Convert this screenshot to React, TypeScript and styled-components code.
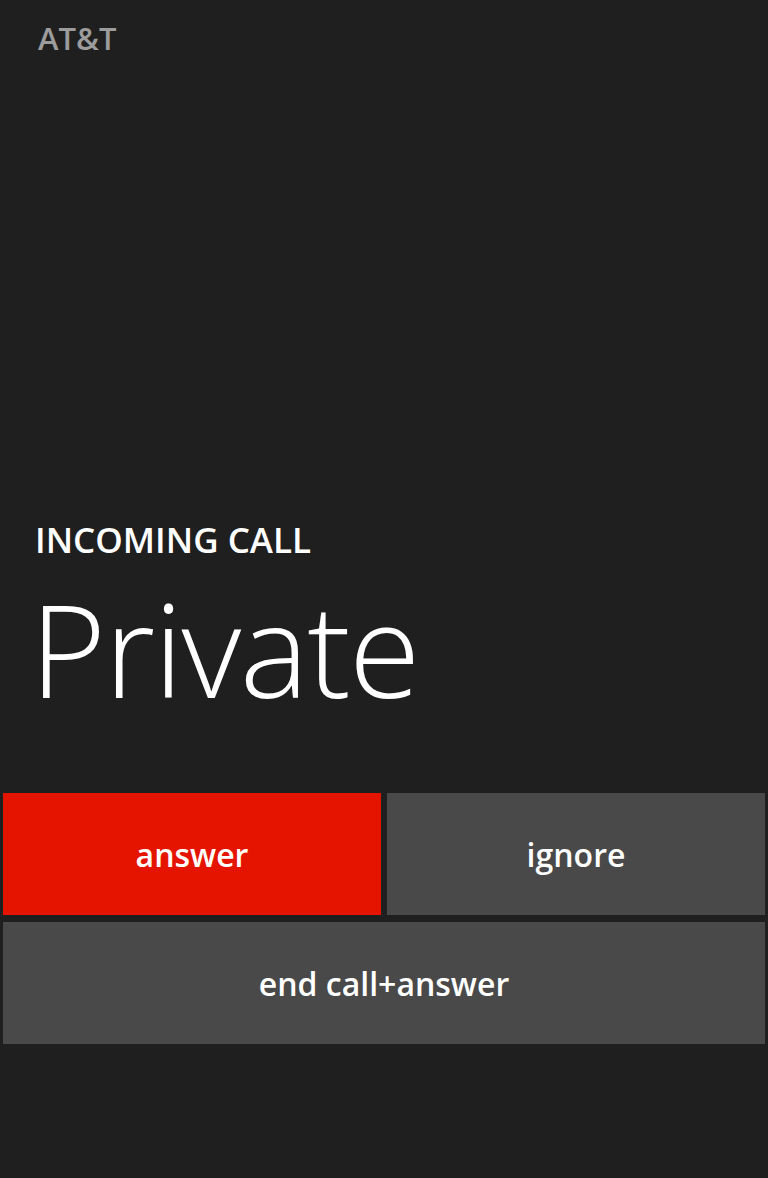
import React from "react";
import styled, { createGlobalStyle } from "styled-components";

const Global = createGlobalStyle`
  html, body { margin: 0; padding: 0; background: #1f1f1f; }
  * { box-sizing: border-box; }
`;

const Screen = styled.div`
  width: 768px;
  height: 1178px;
  background: #1f1f1f;
  display: flex;
  flex-direction: column;
  font-family: "Open Sans", "Noto Sans", sans-serif;
  color: #ffffff;
  overflow: hidden;
`;

const Carrier = styled.div`
  padding: 18px 0 0 38px;
  font-size: 31px;
  font-weight: 600;
  line-height: 40px;
  color: #9c9c9c;
`;

const Spacer = styled.div`
  flex: 1;
`;

const CallInfo = styled.div`
  padding-left: 35px;
  display: flex;
  flex-direction: column;
`;

const Label = styled.div`
  font-size: 35px;
  font-weight: 600;
  line-height: 38px;
`;

const Caller = styled.div`
  margin-left: -5px;
  font-size: 130px;
  font-weight: 300;
  line-height: 177px;
  letter-spacing: -1.5px;
`;

const Buttons = styled.div`
  display: grid;
  grid-template-columns: 1fr 1fr;
  column-gap: 6px;
  row-gap: 7px;
  padding: 0 3px;
  margin-top: 57px;
  margin-bottom: 134px;
`;

const ActionButton = styled.button<{ $primary?: boolean; $wide?: boolean }>`
  grid-column: ${(p) => (p.$wide ? "1 / span 2" : "auto")};
  height: 122px;
  border: none;
  background: ${(p) => (p.$primary ? "#e51400" : "#494949")};
  color: #ffffff;
  font-family: "Open Sans", "Noto Sans", sans-serif;
  font-size: 32px;
  font-weight: 600;
  display: flex;
  align-items: center;
  justify-content: center;
  padding: 0;
  cursor: pointer;
`;

export default function App() {
  return (
    <Screen>
      <Global />
      <Carrier>AT&amp;T</Carrier>
      <Spacer />
      <CallInfo>
        <Label>INCOMING CALL</Label>
        <Caller>Private</Caller>
      </CallInfo>
      <Buttons>
        <ActionButton $primary>answer</ActionButton>
        <ActionButton>ignore</ActionButton>
        <ActionButton $wide>end call+answer</ActionButton>
      </Buttons>
    </Screen>
  );
}
